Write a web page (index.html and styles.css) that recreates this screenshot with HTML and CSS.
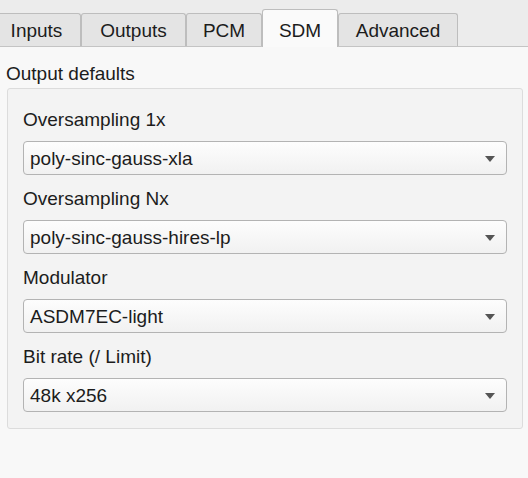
FILE: index.html
```html
<!DOCTYPE html>
<html>
<head>
<meta charset="utf-8">
<link rel="stylesheet" href="styles.css">
</head>
<body>
<div class="tabbar">
  <div class="tab tab-inputs">Inputs</div>
  <div class="tab tab-outputs">Outputs</div>
  <div class="tab tab-pcm">PCM</div>
  <div class="tab tab-sdm selected">SDM</div>
  <div class="tab tab-advanced">Advanced</div>
</div>
<div class="page">
  <div class="section-title">Output defaults</div>
  <div class="groupbox">
    <div class="field">
      <div class="label">Oversampling 1x</div>
      <div class="combo"><span class="value">poly-sinc-gauss-xla</span><span class="arrow"></span></div>
    </div>
    <div class="field">
      <div class="label">Oversampling Nx</div>
      <div class="combo"><span class="value">poly-sinc-gauss-hires-lp</span><span class="arrow"></span></div>
    </div>
    <div class="field">
      <div class="label">Modulator</div>
      <div class="combo"><span class="value">ASDM7EC-light</span><span class="arrow"></span></div>
    </div>
    <div class="field">
      <div class="label">Bit rate (/ Limit)</div>
      <div class="combo"><span class="value">48k x256</span><span class="arrow"></span></div>
    </div>
  </div>
</div>
</body>
</html>
```
FILE: styles.css
```css
* { box-sizing: border-box; }
html, body {
  margin: 0;
  padding: 0;
  width: 528px;
  height: 478px;
  overflow: hidden;
  background: #f8f8f8;
  font-family: "Liberation Sans", Arial, sans-serif;
  font-size: 19px;
  color: #1c1c1c;
}
.tabbar {
  height: 47px;
  background: #ececec;
  border-bottom: 1px solid #c4c4c4;
  display: flex;
  align-items: flex-end;
  overflow: visible;
}
.tab {
  height: 33px;
  background: #e4e4e4;
  border: 1px solid #bdbdbd;
  border-bottom: none;
  border-radius: 3px 3px 0 0;
  text-align: center;
  line-height: 33px;
  flex: none;
}
.tab-inputs { width: 89px; margin-left: -8px; }
.tab-outputs { width: 105px; }
.tab-pcm { width: 76px; }
.tab-sdm { width: 76px; }
.tab-advanced { width: 120px; }
.tab.selected {
  height: 38px;
  margin-bottom: -1px;
  background: #fafafa;
  padding-top: 4px;
  position: relative;
}
.page {
  padding-top: 16px;
}
.section-title {
  margin-left: 6px;
  line-height: 22px;
  height: 22px;
}
.groupbox {
  margin: 3px 5px 0 7px;
  border: 1px solid #dcdcdc;
  border-radius: 3px;
  background: #f3f3f3;
  padding: 21px 15px 16px 15px;
  display: flex;
  flex-direction: column;
  gap: 14px;
}
.field {
  display: flex;
  flex-direction: column;
  gap: 11px;
}
.label {
  line-height: 20px;
  height: 20px;
}
.combo {
  height: 34px;
  border: 1px solid #b3b3b3;
  border-radius: 4px;
  background: linear-gradient(#fdfdfd, #f1f1f1);
  padding: 1px 11px 0 6px;
  line-height: 31px;
  display: flex;
  align-items: center;
  justify-content: space-between;
}
.value { line-height: 31px; }
.arrow {
  width: 0;
  height: 0;
  border-left: 5px solid transparent;
  border-right: 5px solid transparent;
  border-top: 6px solid #555555;
}
```
